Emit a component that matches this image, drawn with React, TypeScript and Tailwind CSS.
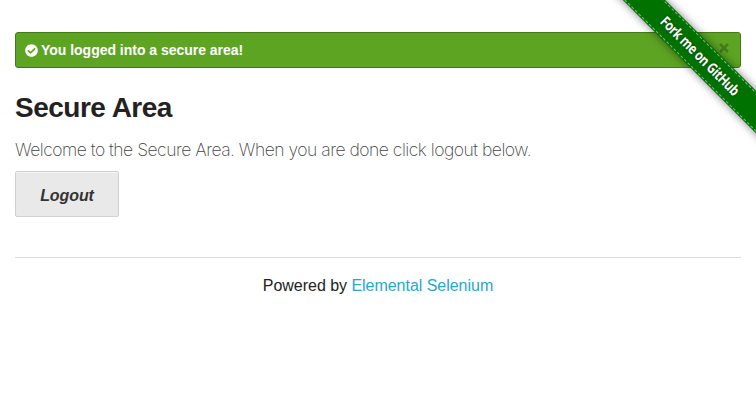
import { FaCheckCircle } from "react-icons/fa";

function ForkRibbon() {
  return (
    <div className="pointer-events-none absolute top-0 right-0 h-[180px] w-[180px] overflow-hidden">
      <a
        href="#"
        className="pointer-events-auto absolute top-[41px] -right-[52px] flex h-[30px] w-[216px] rotate-45 items-center justify-center bg-[#007200] shadow-[0_0_8px_0_rgba(0,0,0,0.5)]"
      >
        <span className="absolute inset-x-0 top-px border-t border-dashed border-[#80b980]" />
        <span className="scale-x-[0.82] font-['Open_Sans',sans-serif] text-[14.5px] leading-none font-bold tracking-[-0.5px] whitespace-nowrap text-white [text-shadow:0_0_3px_rgba(0,0,0,0.5)]">
          Fork me on GitHub
        </span>
        <span className="absolute inset-x-0 bottom-px border-b border-dashed border-[#80b980]" />
      </a>
    </div>
  );
}

export default function App() {
  return (
    <div className="relative h-[417px] overflow-hidden bg-white px-[15px] pt-8 font-['Liberation_Sans',Arial,sans-serif] text-[#222]">
      <div className="flex h-9 items-center justify-between rounded-[3px] border border-[#457a1a] bg-[#5da423] pr-[11px] pl-[9px] text-white">
        <div className="flex items-center gap-[3px]">
          <FaCheckCircle className="size-[13px]" />
          <span className="text-[14px] leading-none font-bold tracking-[-0.02px]">You logged into a secure area!</span>
        </div>
        <button aria-label="Close" className="flex pb-1">
          <svg className="size-[10px]" viewBox="0 0 10 10" stroke="#467c1a" strokeWidth="2.5">
            <path d="M1 1l8 8M9 1l-8 8" />
          </svg>
        </button>
      </div>
      <h2 className="mt-[21px] text-[28px] leading-[38px] font-bold tracking-[-0.5px]">Secure Area</h2>
      <h4 className="mt-[11px] font-['Inter',sans-serif] text-[17.5px] leading-[24px] font-extralight tracking-[-0.49px] whitespace-nowrap text-[#444]">
        Welcome to the Secure Area. When you are done click logout below.
      </h4>
      <a
        href="#"
        className="mt-[9px] flex h-[46px] w-[104px] items-center justify-center rounded-[2px] border border-[#d0d0d0] bg-[#e9e9e9] pt-[3px] text-[16px] leading-none font-bold tracking-[-0.1px] text-[#333] italic shadow-[inset_0_1px_0_rgba(255,255,255,0.5)]"
      >
        Logout
      </a>
      <hr className="mt-10 border-t border-[#ddd]" />
      <div className="mt-[18px] text-center text-[16px] leading-5 tracking-[-0.03px]">
        Powered by <a href="#" className="text-[#2ba6cb]">Elemental Selenium</a>
      </div>
      <ForkRibbon />
    </div>
  );
}
